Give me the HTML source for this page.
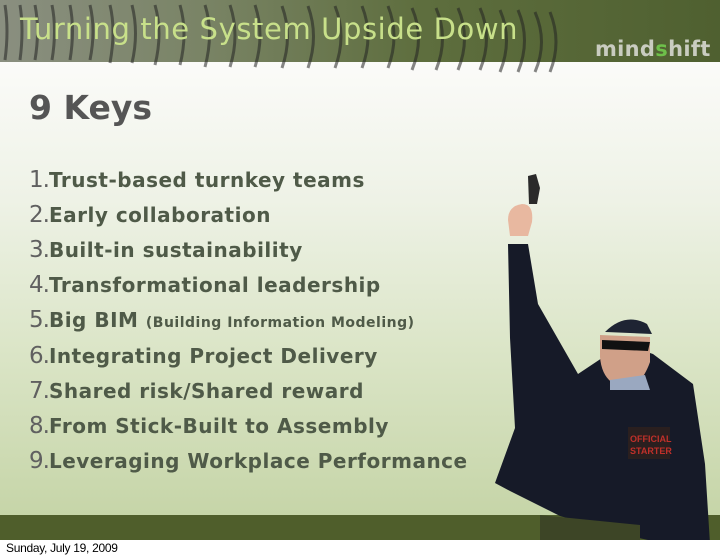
<!DOCTYPE html>
<html><head><meta charset="utf-8"><style>
body{margin:0;width:720px;height:560px;position:relative;overflow:hidden;background:#fff;font-family:"DejaVu Sans","Liberation Sans",sans-serif}
#slide{position:absolute;left:0;top:0;width:720px;height:540px;background:linear-gradient(#fbfbf9 62px,#eef2e6 200px,#dbe5c7 350px,#c6d5a8 515px)}
#hdr{position:absolute;left:0;top:0;width:720px;height:62px;background:linear-gradient(90deg,#8a8f80 0,#7a8466 200px,#5e6e3e 420px,#4f6030 720px)}
#title{position:absolute;left:20px;top:12px;font-size:29px;color:#c8e08a;letter-spacing:0.6px}
#logo{position:absolute;left:595px;top:37px;font-size:21px;font-weight:bold;color:#c9ccc0;letter-spacing:0.3px}
#logo b{color:#6ec04a}
h1{position:absolute;left:29px;top:88px;margin:0;font-size:33px;font-weight:bold;color:#555}
.it{position:absolute;left:29px;font-size:20px;font-weight:bold;color:#4f5a48;white-space:nowrap;letter-spacing:0.5px}
.it span{font-weight:normal;font-size:23px;color:#606060;letter-spacing:-1px}
.it small{font-size:14px;letter-spacing:0.5px}
#band{position:absolute;left:0;top:515px;width:720px;height:25px;background:#4f5e2b}
#date{position:absolute;left:6px;top:541px;font-family:"Liberation Sans",sans-serif;font-size:12px;color:#000;letter-spacing:-0.3px}
</style></head><body>
<div id="slide"></div>
<div id="hdr">
<svg width="600" height="75" style="position:absolute;left:0;top:0" >
<g fill="none" stroke="#222" stroke-opacity="0.55" stroke-width="3">
<path d="M5 5 q4 25 0 55 M20 5 q4 25 0 55 M35 5 q5 25 0 55 M52 5 q5 25 0 55 M70 5 q5 25 0 55 M90 5 q6 25 0 55 M110 5 q6 25 0 58 M132 5 q7 28 0 58 M155 5 q8 28 0 60 M180 5 q8 28 0 60 M205 5 q9 28 0 62 M230 5 q10 30 0 62 M255 5 q10 30 0 62 M282 6 q11 30 0 62 M308 6 q11 30 0 62 M335 6 q12 30 0 62 M362 6 q12 30 0 62 M388 6 q12 30 0 62 M412 8 q13 30 0 62 M436 8 q13 30 0 62 M458 8 q13 30 0 62 M480 8 q13 30 0 62 M500 10 q13 30 0 62 M518 10 q13 30 0 62 M535 12 q13 30 0 60 M550 12 q12 30 0 60"/>
</g></svg>
<div id="title">Turning the System Upside Down</div>
<div id="logo">mind<b>s</b>hift</div>
</div>
<h1>9 Keys</h1>
<div class="it" style="top:167px"><span>1.</span>Trust-based turnkey teams</div>
<div class="it" style="top:202px"><span>2.</span>Early collaboration</div>
<div class="it" style="top:237px"><span>3.</span>Built-in sustainability</div>
<div class="it" style="top:272px"><span>4.</span>Transformational leadership</div>
<div class="it" style="top:307px"><span>5.</span>Big BIM <small>(Building Information Modeling)</small></div>
<div class="it" style="top:343px"><span>6.</span>Integrating Project Delivery</div>
<div class="it" style="top:378px"><span>7.</span>Shared risk/Shared reward</div>
<div class="it" style="top:413px"><span>8.</span>From Stick-Built to Assembly</div>
<div class="it" style="top:448px"><span>9.</span>Leveraging Workplace Performance</div>
<div id="band"></div>
<svg width="240" height="370" style="position:absolute;left:480px;top:170px">
<path d="M48 6 l8 -2 l4 14 l-3 16 l-8 0 z" fill="#2a2a2a"/>
<path d="M28 50 q0 -14 14 -16 q12 0 10 18 l-4 14 l-18 0 z" fill="#e8b8a0"/>
<path d="M28 74 l20 0 l10 60 l40 70 l45 -30 l30 10 l40 30 l12 80 l5 80 l-35 2 l-45 -10 l-70 -20 l-50 -25 l-15 -8 l20 -55 l-5 -90 z" fill="#161a28"/>
<path d="M125 162 q20 -20 42 -8 l5 10 l-46 -2 z" fill="#1e2433"/>
<path d="M120 165 l50 2 l0 25 q-10 28 -28 25 q-20 -5 -22 -30 z" fill="#d0a088"/>
<path d="M122 170 l48 2 l-2 9 l-46 -2 z" fill="#111"/>
<path d="M130 210 l35 -5 l5 15 l-40 0 z" fill="#9aa8c0"/>
<rect x="148" y="257" width="42" height="32" fill="#2a1f1f"/>
<text x="150" y="272" font-family="Liberation Sans,sans-serif" font-size="9" font-weight="bold" fill="#c0302a">OFFICIAL</text>
<text x="150" y="284" font-family="Liberation Sans,sans-serif" font-size="9" font-weight="bold" fill="#c0302a">STARTER</text>
<path d="M60 345 l100 10 l0 15 l-100 0 z" fill="#3d4526"/>
</svg>
<div id="date">Sunday, July 19, 2009</div>
</body></html>
